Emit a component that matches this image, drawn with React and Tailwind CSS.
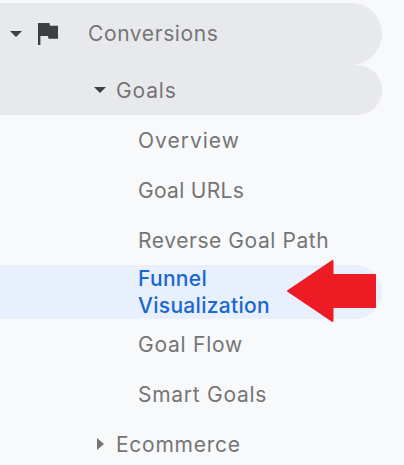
const goalsTop = [
  { label: 'Overview', tracking: 'tracking-[1px]' },
  { label: 'Goal URLs', tracking: 'tracking-[0.3px]' },
  { label: 'Reverse Goal Path', tracking: 'tracking-[0.57px]' },
]

const goalsBottom = [
  { label: 'Goal Flow', tracking: 'tracking-[0.75px]' },
  { label: 'Smart Goals', tracking: 'tracking-[0.72px]' },
]

function CaretDown() {
  return (
    <svg viewBox="0 0 12 6" className="h-[6px] w-[12px] shrink-0 fill-[#3c4043]">
      <path d="M0 0h12L6 6z" />
    </svg>
  )
}

function Flag() {
  return (
    <svg viewBox="0 0 20 22" className="h-[22px] w-[20px] shrink-0 fill-[#3c4043]">
      <path d="M0 0h11.500l.5 2.700h8v13h-9.500l-.5-2.700H2.400v9H0z" />
    </svg>
  )
}

function SubItem({ label, tracking }) {
  return (
    <a className="flex h-[50px] items-center pl-[138px]">
      <span className={tracking}>{label}</span>
    </a>
  )
}

function Arrow() {
  return (
    <svg
      viewBox="0 0 90 64"
      className="absolute top-[-6px] left-[287px] h-[64px] w-[90px] fill-[#ed1c24] stroke-[#ed1c24]"
    >
      <path d="M1 32L45.500 2V16H88V48H45.500V62Z" strokeWidth="2" strokeLinejoin="round" />
    </svg>
  )
}

export default function App() {
  return (
    <nav className="h-[465px] w-[404px] overflow-hidden bg-[#f8f9fb] pt-[3px] font-['Inter',sans-serif] text-[21px] leading-[27px] whitespace-nowrap text-[#757575]">
      <div className="flex h-[62px] w-[382px] items-center rounded-r-full bg-[#e8e9ec] pl-[10px]">
        <CaretDown />
        <div className="ml-[16px] flex">
          <Flag />
        </div>
        <span className="ml-[30px] pb-[2px] tracking-[0.6px]">Conversions</span>
      </div>
      <div className="flex h-[50px] w-[382px] items-center rounded-r-full bg-[#e8e9ec] pl-[94px]">
        <CaretDown />
        <span className="ml-[10px] tracking-[0.85px]">Goals</span>
      </div>

      {goalsTop.map((item) => (
        <SubItem key={item.label} {...item} />
      ))}

      <div className="relative">
        <a className="flex h-[54px] w-[382px] flex-col justify-center rounded-r-full bg-[#e8effd] pl-[138px] font-medium text-[#1967d2]">
          <span className="tracking-[0.3px]">Funnel</span>
          <span className="tracking-[0.3px]">Visualization</span>
        </a>
        <Arrow />
      </div>

      {goalsBottom.map((item) => (
        <SubItem key={item.label} {...item} />
      ))}

      <div className="flex h-[50px] items-center pl-[97px]">
        <svg viewBox="0 0 7 12" className="h-[12px] w-[7px] shrink-0 fill-[#757575]">
          <path d="M0 0l7 6-7 6z" />
        </svg>
        <span className="ml-[12px] tracking-[0.75px]">Ecommerce</span>
      </div>
    </nav>
  )
}
